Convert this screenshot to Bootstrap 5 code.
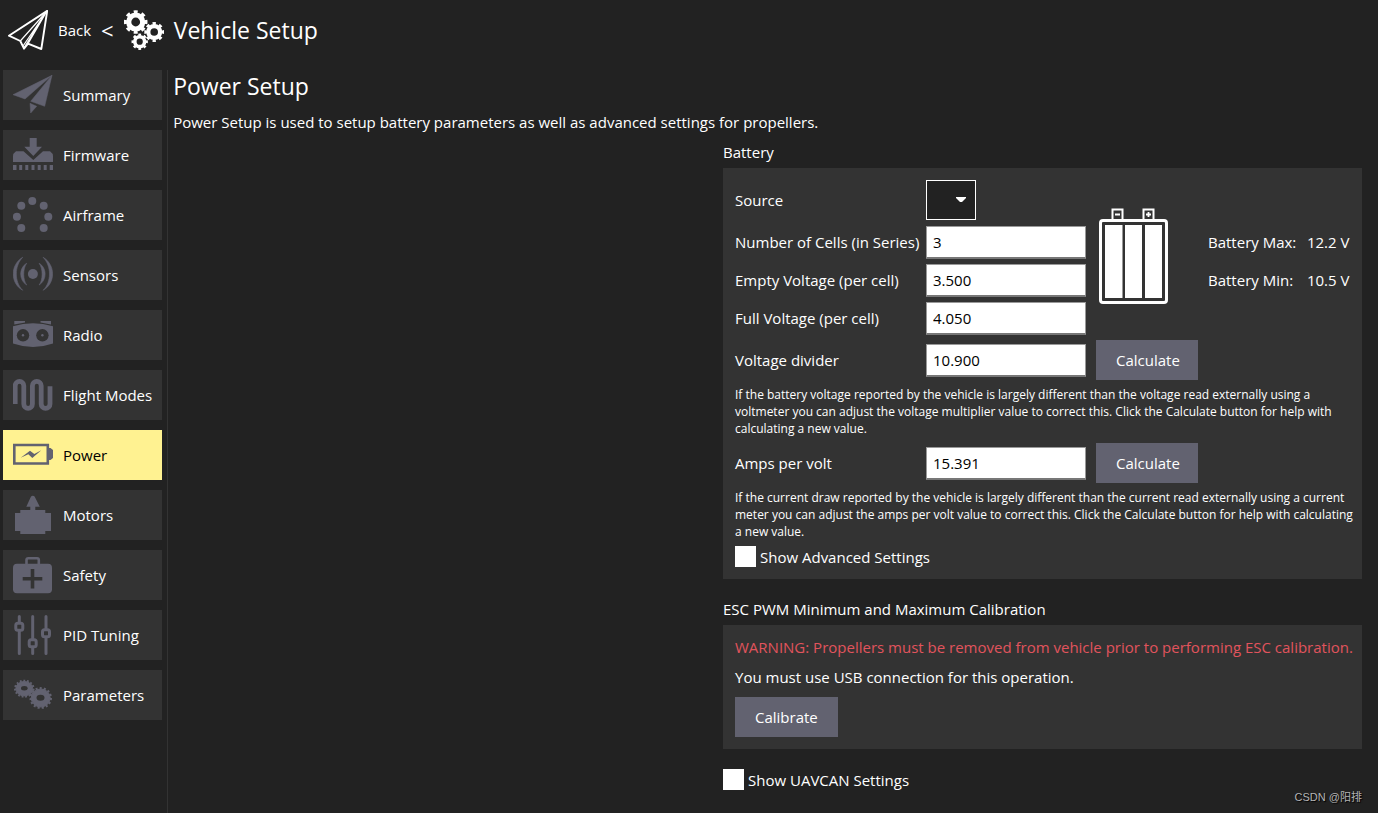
<!DOCTYPE html>
<html lang="en">
<head>
<meta charset="utf-8">
<meta name="viewport" content="width=device-width, initial-scale=1">
<title>Vehicle Setup - Power</title>
<link href="https://cdn.jsdelivr.net/npm/bootstrap@5.3.0/dist/css/bootstrap.min.css" rel="stylesheet">
<style>
  :root { --page: #222; --panel: #333; --muted: #626270; --accent: #fff291; --gap: 10px; }
  body { background: var(--page); color: #fff; font: 15px/20px "Open Sans", "Noto Sans", sans-serif; }
  .toolbar { height: 60px; padding: 0 8px; gap: var(--gap); margin-bottom: 10px; }
  .toolbar a { color: #fff; gap: var(--gap); }
  .crumb { font-size: 22px; }
  .page-title { font-size: 23px; line-height: 28px; font-weight: 400; margin: 0; }
  .side { padding: 0 5px 10px 3px; gap: var(--gap); border-right: 1px solid #333; }
  .side .btn { min-width: 159px; height: 50px; padding: 0 10px; gap: var(--gap); background: var(--panel); color: #fff; border: 0; border-radius: 0; font-size: 15px; line-height: 20px; }
  .side .btn:hover, .side .btn.active { background: var(--accent); color: #000; }
  .side svg { color: var(--muted); }
  .cut { fill: var(--panel); }
  .cutline { stroke: var(--panel); }
  .content { padding: 2px 16px 20px 5px; gap: var(--gap); }
  .content .page-title { margin-bottom: 2px; }
  .settings { width: 639px; max-width: 100%; gap: 20px; }
  .group-title { font-size: 15px; line-height: 20px; font-weight: 400; margin: 0 0 6px; }
  .panel { background: var(--panel); padding: 12px; }
  .params { display: grid; grid-template-columns: 181px 160px 102px auto auto; gap: 6px 10px; align-items: center; justify-content: start; white-space: nowrap; }
  .params .note { grid-column: 1 / -1; font-size: 12px; line-height: 17px; margin: 0 -8px 0 0; white-space: normal; }
  .params .batt { grid-column: 3; grid-row: 1 / span 4; }
  .col-a { grid-column: 1; }
  .params .form-control { height: 33px; margin-bottom: -1px; padding: 0 6px; border: 1px solid #999; border-bottom: 2px solid #777; border-radius: 0; background: #fff; color: #000; font-size: 15px; line-height: 20px; }
  .params .form-select { width: 50px; height: 40px; padding: 0 20px 0 8px; border: 1px solid #fff; border-radius: 0; color: #fff; background: var(--page) url("data:image/svg+xml,%3csvg xmlns='http://www.w3.org/2000/svg' viewBox='0 0 10 8'%3e%3cpath fill='%23fff' d='M0 1h10v1l-4 4h-2l-4-4z'/%3e%3c/svg%3e") no-repeat right 9px center / 10px 8px; }
  .act { height: 40px; padding: 0 20px; border: 0; border-radius: 0; background: var(--muted); color: #fff; font-size: 15px; line-height: 20px; }
  .act:hover { background: var(--accent); color: #000; }
  .tick { gap: 4px; }
  .tick .form-check-input { width: 21px; height: 21px; margin: 0; border: 0; border-radius: 0; background-color: #fff; }
  .tick .form-check-input:checked { background-color: var(--muted); }
  .steps { gap: var(--gap); }
  .warn { color: #e1545d; white-space: nowrap; }
  .credit { right: 16px; bottom: 8px; color: #b4b4b4; font: 11px/16px "Liberation Sans", "Noto Sans CJK SC", sans-serif; text-shadow: 1px 1px 1px #000; }
</style>
</head>
<body>
<div class="d-flex flex-column min-vh-100 position-relative">
  <header class="toolbar d-flex align-items-center">
    <a href="#" class="d-flex align-items-center text-decoration-none">
      <svg width="40" height="40" viewBox="0 0 40 40" fill="none" stroke="currentColor" stroke-linejoin="round" aria-hidden="true">
        <path stroke-width="1.900" d="M39.200.900.900 25.700 12.300 31 16 38.700 20 33.700 33.300 39z"/>
        <path stroke-width="1.200" d="M39 1 12.300 31M39 1 15 36M39 1 16.500 37M39 1 20 33.700"/>
      </svg>
      <span>Back</span><span class="crumb">&lt;</span>
    </a>
    <svg width="40" height="40" viewBox="0 0 40 40" fill="none" stroke="#fff" aria-hidden="true">
      <circle cx="11.700" cy="12" r="7" stroke-width="5.200"/>
      <circle cx="11.700" cy="12" r="10.300" stroke-width="3" pathLength="16" stroke-dasharray="1 1" stroke-dashoffset=".5"/>
      <circle cx="30.200" cy="22" r="5.900" stroke-width="4.200"/>
      <circle cx="30.200" cy="22" r="8.500" stroke-width="2.800" pathLength="16" stroke-dasharray="1 1" stroke-dashoffset=".5"/>
      <circle cx="15.700" cy="31.700" r="4.900" stroke-width="3.600"/>
      <circle cx="15.700" cy="31.700" r="7" stroke-width="2.400" pathLength="16" stroke-dasharray="1 1" stroke-dashoffset=".5"/>
    </svg>
    <h1 class="page-title">Vehicle Setup</h1>
  </header>

  <div class="d-flex flex-grow-1">
    <nav class="side d-flex flex-column flex-shrink-0" aria-label="Setup pages">
      <button type="button" class="btn d-flex align-items-center">
        <svg width="40" height="40" fill="currentColor"><path d="M39 .3 0 19.700 12 24zM39 .3 17.700 26.300l14 5zM17 28.300l6.700 3-6 6.700z" stroke="currentColor" stroke-width=".5"/></svg>Summary</button>
      <button type="button" class="btn d-flex align-items-center">
        <svg width="40" height="40" fill="currentColor"><path d="M16.700 3h7v8.700H29l-8.700 9.300-9-9.300h5.400zM3 16.300h7.500l9.800 8.700 9.700-8.700h7q3 2 3 5V27H0v-5.700q0-3 3-5zM0 30h3.500v5H0zM6.200 30h3v5h-3zM12.300 30h3v5h-3zM18.500 30h3v5h-3zM24.700 30h3v5h-3zM30.700 30h3v5h-3zM36.700 30H40v5h-3.300z"/></svg>Firmware</button>
      <button type="button" class="btn d-flex align-items-center">
        <svg width="40" height="40" fill="currentColor"><circle cx="19.300" cy="6" r="4"/><circle cx="8.300" cy="10.700" r="4"/><circle cx="30.700" cy="10.700" r="4"/><circle cx="3.900" cy="21.700" r="4"/><circle cx="35.300" cy="21.700" r="4"/><circle cx="8.300" cy="33" r="4"/><circle cx="30.700" cy="33" r="4"/></svg>Airframe</button>
      <button type="button" class="btn d-flex align-items-center">
        <svg width="40" height="40" fill="currentColor"><circle cx="19.900" cy="19" r="5"/><path d="M9.700 2.300C-3 10-3 28 9.700 35.300 1.200 27 1.200 11 9.700 2.300zM13.700 8.300C5.700 13 5.700 25 13.700 30c-4-5-4-16.700 0-21.700zM30.100 2.300c12.700 7.700 12.700 25.700 0 33 8.500-8.300 8.500-24.300 0-33zM26.100 8.300c8 4.700 8 16.700 0 21.700 4-5 4-16.700 0-21.700z" stroke="currentColor" stroke-width=".6"/></svg>Sensors</button>
      <button type="button" class="btn d-flex align-items-center">
        <svg width="40" height="40" fill="currentColor"><path d="M1.300 6H12v1.500L1.300 9.500zM27.500 6H38v3.500L27.500 7.500zM0 11.300q20-6 40 0V28.500q-20 7-40 0z"/><g class="cut"><circle cx="10" cy="20.300" r="6.200"/><circle cx="29.400" cy="20.300" r="6.200"/></g><circle cx="10" cy="20.300" r="1.200"/><circle cx="29.400" cy="20.300" r="1.200"/></svg>Radio</button>
      <button type="button" class="btn d-flex align-items-center">
        <svg width="40" height="40" fill="none" stroke="currentColor" stroke-width="4.800"><path d="M2.200 29V10.700a4.300 4.300 0 0 1 8.600 0V29a4.300 4.300 0 0 0 8.600 0V10.700a4.300 4.300 0 0 1 8.800 0V29a4.300 4.300 0 0 0 8.800 0V11.300"/></svg>Flight Modes</button>
      <button type="button" class="btn d-flex align-items-center active" aria-current="page">
        <svg width="40" height="40" fill="currentColor"><path fill="none" stroke="currentColor" stroke-width="2.600" d="M1.300 10h33.500v18.500H1.300z"/><path d="M36 13h1.500l2.500 2v8l-2.500 2H36zM7.700 22.700 17 15.700l4.300 3.300 7-3.700-9 7.700-4-3.700z"/></svg>Power</button>
      <button type="button" class="btn d-flex align-items-center">
        <svg width="40" height="40" fill="currentColor"><path d="M18 1.500q1.800-1.500 3.600 0l5.200 10.200h-4.500V15h10v3H38v18h-5.700v3h-25v-3H2V18h5.300v-3h10v-3.300h-4z"/></svg>Motors</button>
      <button type="button" class="btn d-flex align-items-center">
        <svg width="40" height="40" fill="currentColor"><rect y="8.700" width="39" height="29.500" rx="4"/><path fill="none" stroke="currentColor" stroke-width="2.600" d="M13.500 9.500V5q0-1.700 1.700-1.700h8.900Q25.800 3.300 25.800 5v4.500"/><path class="cutline" stroke-width="3.600" d="M19.500 14v19.500M9.700 23.700h19.600"/></svg>Safety</button>
      <button type="button" class="btn d-flex align-items-center">
        <svg width="40" height="40" fill="none" stroke="currentColor" stroke-width="3"><path stroke-linecap="round" d="M6.300 1.500v37M19.700 1.500v37M33 1.500v37"/><g class="cut"><rect x="2.800" y="8.200" width="7" height="7" rx="2"/><rect x="16.200" y="24.800" width="7" height="7" rx="2"/><rect x="29.500" y="14.700" width="7" height="7" rx="2"/></g></svg>PID Tuning</button>
      <button type="button" class="btn d-flex align-items-center">
        <svg width="40" height="40" fill="currentColor" stroke="currentColor"><ellipse cx="11.300" cy="13.700" rx="8.500" ry="7.200"/><ellipse cx="11.300" cy="13.700" rx="9.300" ry="8" fill="none" stroke-width="2" pathLength="30" stroke-dasharray="1 1"/><ellipse cx="27.700" cy="23" rx="9.500" ry="9"/><ellipse cx="27.700" cy="23" rx="10.200" ry="9.800" fill="none" stroke-width="2.200" pathLength="30" stroke-dasharray="1 1"/><g class="cut" stroke="none"><ellipse cx="11.300" cy="13.300" rx="3.300" ry="2.200"/><ellipse cx="27.500" cy="22.700" rx="4" ry="3"/></g></svg>Parameters</button>
    </nav>

    <main class="content d-flex flex-column flex-grow-1">
      <h2 class="page-title">Power Setup</h2>
      <p class="m-0">Power Setup is used to setup battery parameters as well as advanced settings for propellers.</p>

      <form class="settings d-flex flex-column ms-auto">
        <section>
          <h3 class="group-title">Battery</h3>
          <div class="panel">
            <div class="params">
              <label for="source">Source</label>
              <select id="source" class="form-select"><option></option></select>
              <svg class="batt" width="75" height="100" fill="none" stroke="#fff" aria-hidden="true">
                <rect x="4.500" y="13.500" width="66" height="82" rx="2.500" stroke-width="3"/>
                <path stroke-width="2" d="M16.500 12V2.500h10V12M47.500 12V2.500h10V12"/>
                <path stroke-width="1.800" d="M19 7.500h5M50 7.500h5M52.500 5v5"/>
                <path fill="#fff" stroke="none" d="M9 18h17.500v73H9zM29 18h17v73H29zM49 18h17v73H49z"/>
              </svg>
              <label for="cells" class="col-a">Number of Cells (in Series)</label>
              <input id="cells" class="form-control" value="3">
              <span>Battery Max:</span><span>12.2 V</span>
              <label for="empty" class="col-a">Empty Voltage (per cell)</label>
              <input id="empty" class="form-control" value="3.500">
              <span>Battery Min:</span><span>10.5 V</span>
              <label for="full" class="col-a">Full Voltage (per cell)</label>
              <input id="full" class="form-control" value="4.050">
              <label for="divider" class="col-a">Voltage divider</label>
              <input id="divider" class="form-control" value="10.900">
              <button type="button" class="btn act">Calculate</button>
              <p class="note">If the battery voltage reported by the vehicle is largely different than the voltage read externally using a voltmeter you can adjust the voltage multiplier value to correct this. Click the Calculate button for help with calculating a new value.</p>
              <label for="amps" class="col-a">Amps per volt</label>
              <input id="amps" class="form-control" value="15.391">
              <button type="button" class="btn act">Calculate</button>
              <p class="note">If the current draw reported by the vehicle is largely different than the current read externally using a current meter you can adjust the amps per volt value to correct this. Click the Calculate button for help with calculating a new value.</p>
              <div class="tick d-flex align-items-center col-a">
                <input type="checkbox" class="form-check-input flex-shrink-0" id="advanced"><label for="advanced">Show Advanced Settings</label>
              </div>
            </div>
          </div>
        </section>
        <section>
          <h3 class="group-title">ESC PWM Minimum and Maximum Calibration</h3>
          <div class="panel steps d-flex flex-column align-items-start">
            <p class="warn m-0">WARNING: Propellers must be removed from vehicle prior to performing ESC calibration.</p>
            <p class="m-0">You must use USB connection for this operation.</p>
            <button type="button" class="btn act">Calibrate</button>
          </div>
        </section>
        <div class="tick d-flex align-items-center">
          <input type="checkbox" class="form-check-input flex-shrink-0" id="uavcan"><label for="uavcan">Show UAVCAN Settings</label>
        </div>
      </form>
    </main>
  </div>
  <div class="credit position-absolute">CSDN @阳排</div>
</div>
<script src="https://cdn.jsdelivr.net/npm/bootstrap@5.3.0/dist/js/bootstrap.bundle.min.js"></script>
</body>
</html>
